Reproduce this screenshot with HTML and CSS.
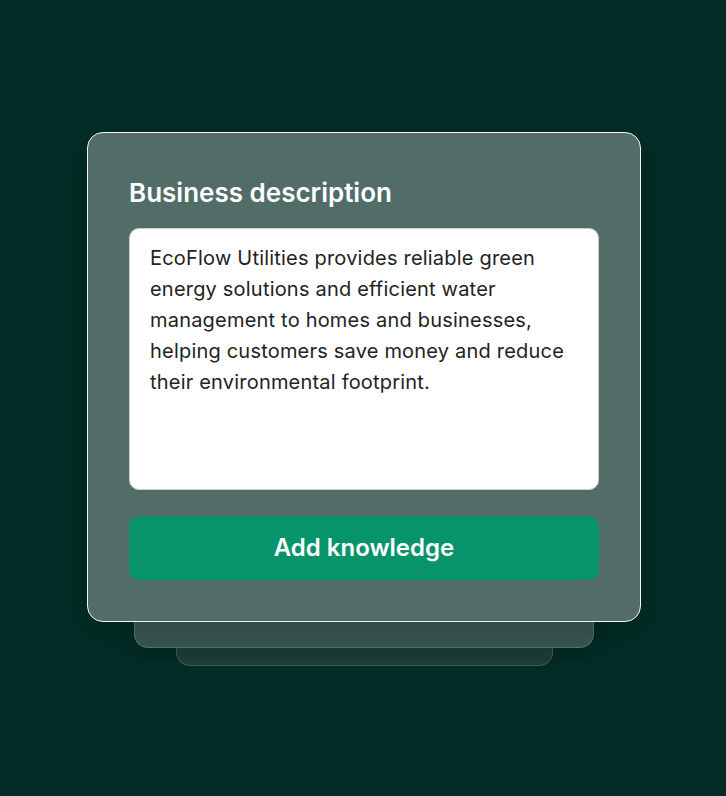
FILE: index.html
```html
<!DOCTYPE html>
<html lang="en">
<head>
<meta charset="utf-8">
<title>Business description</title>
<link rel="stylesheet" href="styles.css">
</head>
<body>
<main class="stage">
  <section class="card">
    <h2 class="card-title">Business description</h2>
    <div class="textbox">EcoFlow Utilities provides reliable green energy solutions and efficient water management to homes and businesses, helping customers save money and reduce their environmental footprint.</div>
    <button class="primary-btn" type="button">Add knowledge</button>
  </section>
  <div class="layer layer-1"></div>
  <div class="layer layer-2"></div>
</main>
</body>
</html>
```
FILE: styles.css
```css
* { box-sizing: border-box; }
html, body {
  margin: 0;
  height: 100%;
}
body {
  background: #022c25;
  font-family: Inter, "Noto Sans", "Liberation Sans", sans-serif;
}
.stage {
  height: 100%;
  display: flex;
  flex-direction: column;
  align-items: center;
  justify-content: center;
  padding-left: 2px;
  padding-top: 1px;
}
.card {
  position: relative;
  z-index: 3;
  width: 554px;
  height: 490px;
  background: #526d67;
  border: 1.5px solid #f2f5f4;
  border-radius: 16px;
  padding: 44px 41px 0;
  display: flex;
  flex-direction: column;
  box-shadow: 0 10px 30px rgba(0, 0, 0, 0.15);
}
.card-title {
  margin: 0 0 19px;
  font-size: 26px;
  line-height: 32px;
  font-weight: 600;
  color: #ffffff;
}
.textbox {
  height: 262px;
  background: #ffffff;
  border: 1px solid #c9cfcd;
  border-radius: 10px;
  padding: 14px 20px;
  font-size: 20px;
  line-height: 31px;
  letter-spacing: 0.2px;
  color: #1e2423;
}
.primary-btn {
  margin-top: 26px;
  height: 64px;
  border: none;
  border-radius: 10px;
  background: #07946a;
  color: #ffffff;
  font-family: inherit;
  font-size: 24px;
  font-weight: 600;
  cursor: pointer;
}
.layer {
  border: 1px solid;
  border-top: none;
  border-radius: 0 0 14px 14px;
}
.layer-1 {
  position: relative;
  z-index: 2;
  width: 460px;
  height: 26px;
  background: #395651;
  border-color: #56716b;
  box-shadow: 0 6px 16px rgba(0, 0, 0, 0.15);
}
.layer-2 {
  position: relative;
  z-index: 1;
  width: 377px;
  height: 18px;
  background: #1e3e37;
  border-color: #3f5d56;
}
```
